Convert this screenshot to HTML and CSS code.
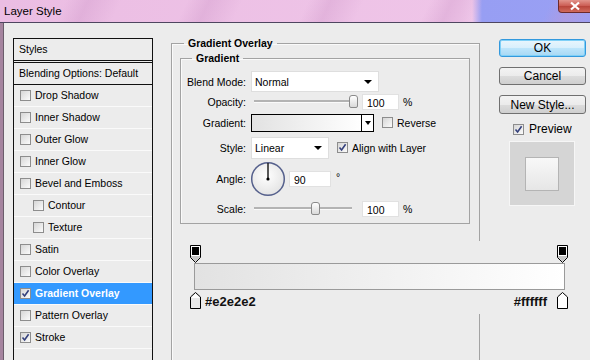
FILE: index.html
```html
<html>
<head>
	<meta http-equiv="Content-Type" content="text/html; charset=UTF-8">
	<title>Layer Style</title>
	<link rel="stylesheet" href="styles.css">
</head>
<body>
<div class="window">
	<div class="titlebar">
		<span class="title">Layer Style</span>
		<span class="close">
			<svg width="14" height="10" viewBox="0 0 14 10"><path d="M3 1.5 L11 8.5 M11 1.5 L3 8.5" stroke="#fff" stroke-width="2.2" fill="none"/></svg>
		</span>
	</div>
	<div class="dialog">
		<div class="styles">
			<div class="styles_head">Styles</div>
			<ul class="style_list">
				<li class="blend">Blending Options: Default</li>
				<li><span class="cb"></span>Drop Shadow</li>
				<li><span class="cb"></span>Inner Shadow</li>
				<li><span class="cb"></span>Outer Glow</li>
				<li><span class="cb"></span>Inner Glow</li>
				<li><span class="cb"></span>Bevel and Emboss</li>
				<li class="sub"><span class="cb"></span>Contour</li>
				<li class="sub"><span class="cb"></span>Texture</li>
				<li><span class="cb"></span>Satin</li>
				<li><span class="cb"></span>Color Overlay</li>
				<li class="sel"><span class="cb"><svg width="9" height="9" viewBox="0 0 9 9"><path d="M1.5 4.5 L3.6 7 L7.6 1.2" fill="none" stroke="#34407c" stroke-width="1.6"/></svg></span>Gradient Overlay</li>
				<li><span class="cb"></span>Pattern Overlay</li>
				<li><span class="cb"><svg width="9" height="9" viewBox="0 0 9 9"><path d="M1.5 4.5 L3.6 7 L7.6 1.2" fill="none" stroke="#34407c" stroke-width="1.6"/></svg></span>Stroke</li>
				<li></li>
			</ul>
		</div>

		<fieldset class="group">
			<legend>Gradient Overlay</legend>
			<fieldset class="group inner">
				<legend>Gradient</legend>
				<div class="row r_blend">
					<span class="lbl">Blend Mode:</span>
					<span class="select sel_blend">Normal<span class="arrow"></span></span>
				</div>
				<div class="row r_opacity">
					<span class="lbl">Opacity:</span>
					<span class="slider"><span class="track"></span><span class="thumb" style="left:95px"></span></span>
					<span class="num">100</span>
					<span class="unit">%</span>
				</div>
				<div class="row r_gradient">
					<span class="lbl">Gradient:</span>
					<span class="swatch"><span class="swatch_fill"></span><span class="swatch_btn"><span class="arrow"></span></span></span>
					<span class="cb"></span><span class="cb_text">Reverse</span>
				</div>
				<div class="row r_style">
					<span class="lbl">Style:</span>
					<span class="select sel_style">Linear<span class="arrow"></span></span>
					<span class="cb"><svg width="9" height="9" viewBox="0 0 9 9"><path d="M1.5 4.5 L3.6 7 L7.6 1.2" fill="none" stroke="#34407c" stroke-width="1.6"/></svg></span><span class="cb_text">Align with Layer</span>
				</div>
				<div class="row r_angle">
					<span class="lbl">Angle:</span>
					<svg class="dial" width="36" height="36" viewBox="0 0 36 36">
						<defs>
							<radialGradient id="dialfill" cx="0.45" cy="0.4" r="0.6">
								<stop offset="0" stop-color="#ffffff"/>
								<stop offset="1" stop-color="#e4e4e4"/>
							</radialGradient>
						</defs>
						<circle cx="18" cy="18" r="16.3" fill="url(#dialfill)" stroke="#55608c" stroke-width="1.5"/>
						<line x1="18" y1="18" x2="18" y2="2" stroke="#000" stroke-width="1.3"/>
						<circle cx="18" cy="18" r="1.6" fill="#000"/>
					</svg>
					<span class="num num_angle">90</span>
					<span class="deg">°</span>
				</div>
				<div class="row r_scale">
					<span class="lbl">Scale:</span>
					<span class="slider"><span class="track"></span><span class="thumb" style="left:57px"></span></span>
					<span class="num">100</span>
					<span class="unit">%</span>
				</div>
			</fieldset>
		</fieldset>

		<div class="actions">
			<button class="btn btn_default">OK</button>
			<button class="btn">Cancel</button>
			<button class="btn btn_new">New Style...</button>
			<div class="preview_check">
				<span class="cb"><svg width="9" height="9" viewBox="0 0 9 9"><path d="M1.5 4.5 L3.6 7 L7.6 1.2" fill="none" stroke="#34407c" stroke-width="1.6"/></svg></span>Preview
			</div>
			<div class="preview_box"><div class="preview_swatch"></div></div>
		</div>
	</div>

	<!-- gradient editor strip pasted over the dialog -->
	<div class="grad_editor">
		<div class="stops">
			<svg width="11" height="18" viewBox="0 0 11 18"><path d="M0.5 0.5 H10.5 V12.5 L5.5 17.5 L0.5 12.5 Z" fill="#fff" stroke="#000"/><rect x="2" y="2" width="7" height="8" fill="#000"/><path d="M1 11 H10 V12.3 L5.5 16.8 L1 12.3 Z" fill="#c4c4c4"/></svg>
			<svg width="11" height="18" viewBox="0 0 11 18"><path d="M0.5 0.5 H10.5 V12.5 L5.5 17.5 L0.5 12.5 Z" fill="#fff" stroke="#000"/><rect x="2" y="2" width="7" height="8" fill="#000"/><path d="M1 11 H10 V12.3 L5.5 16.8 L1 12.3 Z" fill="#c4c4c4"/></svg>
		</div>
		<div class="gbar"></div>
		<div class="stops stops_bottom">
			<span class="stop_group">
				<svg width="11" height="17" viewBox="0 0 11 17"><path d="M5.5 0.5 L10.5 5 V16.5 H0.5 V5 Z" fill="#e8e8e8" stroke="#000"/><path d="M5.5 1.8 L9.5 5.4 V6 H1.5 V5.4 Z" fill="#fff"/></svg>
				<span class="hex hex_left">#e2e2e2</span>
			</span>
			<span class="stop_group">
				<span class="hex hex_right">#ffffff</span>
				<svg width="11" height="17" viewBox="0 0 11 17"><path d="M5.5 0.5 L10.5 5 V16.5 H0.5 V5 Z" fill="#fff" stroke="#000"/></svg>
			</span>
		</div>
	</div>
</div>
</body>
</html>
```

FILE: styles.css
```css
body
{
	margin: 0;
	background-color: #ececec;
	font-family: "Liberation Sans", Arial, sans-serif;
	font-size: 10.5px;
	color: #000;
	overflow: hidden;
}
.window
{
	position: relative;
	width: 590px;
	height: 360px;
	overflow: hidden;
}

/* title bar */
.titlebar
{
	height: 22px;
	border-bottom: 1px solid #4e4660;
	background:
		repeating-linear-gradient(115deg, rgba(255,255,255,0) 0, rgba(255,255,255,0) 60px, rgba(205,150,200,0.35) 80px, rgba(255,255,255,0) 110px),
		linear-gradient(90deg, #ebbde3 0, #efc5e8 460px, #f0c8ea 472px, #979ef3 482px, #9aa0f4 100%);
	display: flex;
	align-items: flex-start;
	justify-content: space-between;
}
.title
{
	font-size: 11.5px;
	line-height: 22px;
	margin-left: 4px;
}
.close
{
	width: 33px;
	height: 13px;
	margin-right: -1px;
	box-sizing: border-box;
	border: 1px solid #6d2a2a;
	border-top: none;
	border-radius: 0 0 0 4px;
	background: linear-gradient(#e2948c 0, #cb5b52 50%, #b8443a 51%, #d06a5c 100%);
	display: flex;
	align-items: center;
	justify-content: center;
}

/* dialog */
.dialog
{
	display: flex;
	align-items: flex-start;
	height: 337px;
	padding-left: 10px;
	border-left: 3px solid #a5849f;
	box-shadow: inset 1px 0 0 #6b5d6b;
}

.styles
{
	width: 140px;
	margin-top: 15px;
	box-sizing: border-box;
	border: 1px solid #111;
	border-bottom: none;
	height: 330px;
}
.styles_head
{
	height: 21px;
	line-height: 20px;
	padding-left: 5px;
	border-bottom: 1px solid #111;
	margin-bottom: 1px;
}
.style_list
{
	list-style: none;
	margin: 0;
	padding: 0;
	border-top: 1px solid #111;
}
.style_list li
{
	height: 20px;
	padding-bottom: 1px;
	border-bottom: 1px solid #fafafa;
	display: flex;
	align-items: center;
	padding-left: 6px;
}
.style_list li.blend
{
	height: 20px;
	padding-left: 5px;
	border-bottom: 1px solid #111;
}
.style_list li.sub
{
	padding-left: 19px;
}
.style_list li.sel
{
	background-color: #3399ff;
	color: #fff;
	font-weight: bold;
}

/* checkbox */
.cb
{
	display: inline-flex;
	align-items: center;
	justify-content: center;
	width: 9px;
	height: 9px;
	border: 1px solid #8d8d8d;
	background: linear-gradient(135deg, #d6d6d6, #fbfbfb);
	margin-right: 4px;
	flex: none;
}
.cb svg
{
	display: block;
}

/* groups */
.group
{
	margin: 13px 0 0 18px;
	padding: 0 9px 0 8px;
	width: 309px;
	height: 400px;
	box-sizing: border-box;
	border: 1px solid #a3a3a3;
	box-shadow: inset 1px 1px 0 #fafafa;
}
.group legend
{
	font-weight: bold;
	line-height: 14px;
	padding: 0 4px;
	margin-left: 4px;
}
.group.inner
{
	margin: 1px 0 0 0;
	width: 290px;
	height: auto;
	padding: 6px 0 3px 0;
}
.group.inner legend
{
	margin-left: 11px;
}

.row
{
	display: flex;
	align-items: center;
}
.lbl
{
	width: 65px;
	text-align: right;
	margin-right: 5px;
	flex: none;
}
.r_blend { height: 21px; }
.r_opacity { height: 19px; }
.r_gradient { height: 23px; }
.r_style { height: 27px; }
.r_angle { height: 36px; }
.r_scale { height: 23px; }

.select
{
	position: relative;
	height: 21px;
	line-height: 21px;
	box-sizing: border-box;
	background-color: #fff;
	border: 1px solid #dedede;
	padding-left: 3px;
}
.sel_blend { width: 128px; }
.sel_style { width: 78px; height: 22px; margin-right: 8px; }
.arrow
{
	position: absolute;
	right: 6px;
	top: 50%;
	margin-top: -2px;
	width: 0;
	height: 0;
	border-left: 4px solid transparent;
	border-right: 4px solid transparent;
	border-top: 4px solid #000;
}

.slider
{
	position: relative;
	width: 98px;
	height: 13px;
	margin-left: 3px;
	margin-right: 10px;
}
.track
{
	position: absolute;
	left: 0;
	right: 0;
	top: 5px;
	height: 3px;
	box-sizing: border-box;
	border-top: 2px solid #b3b3b3;
	border-bottom: 1px solid #fafafa;
}
.thumb
{
	position: absolute;
	top: 0;
	width: 7px;
	height: 11px;
	border: 1px solid #8a8a8a;
	border-radius: 3px 3px 2px 2px;
	background: linear-gradient(#ffffff, #d9d9d9);
}

.num
{
	width: 37px;
	height: 16px;
	line-height: 16px;
	box-sizing: border-box;
	background-color: #fff;
	border: 1px solid #e1e1e1;
	padding-left: 4px;
	flex: none;
}
.unit
{
	margin-left: 4px;
}

.swatch
{
	display: flex;
	width: 123px;
	height: 18px;
	box-sizing: border-box;
	border: 1px solid #000;
	margin-right: 8px;
}
.swatch_fill
{
	flex: 1;
	background: linear-gradient(90deg, #e2e2e2, #ffffff);
}
.swatch_btn
{
	position: relative;
	width: 11px;
	border-left: 1px solid #000;
	background-color: #fff;
}
.swatch_btn .arrow
{
	right: 2px;
	border-left-width: 3px;
	border-right-width: 3px;
}

.dial
{
	margin-left: -1px;
	margin-right: 3px;
}
.num_angle
{
	width: 42px;
}
.deg
{
	margin-left: 5px;
	align-self: flex-start;
	margin-top: 10px;
}

/* buttons column */
.actions
{
	margin: 16px 0 0 19px;
	width: 87px;
	display: flex;
	flex-direction: column;
}
.btn
{
	width: 87px;
	height: 18px;
	padding: 0;
	box-sizing: border-box;
	border: 1px solid #707070;
	border-radius: 3px;
	background: linear-gradient(#f3f3f3 0, #ebebeb 50%, #dcdcdc 51%, #cfcfcf 100%);
	font-family: "Liberation Sans", Arial, sans-serif;
	font-size: 12px;
	line-height: 16px;
	color: #000;
	margin-bottom: 10px;
}
.btn_default
{
	border-color: #3399dd;
	background: linear-gradient(#e9f6fd 0, #d8effc 50%, #bde5fb 51%, #a7d8f4 100%);
	box-shadow: inset 0 0 0 1px #7fd0f7;
}
.btn_new
{
	height: 19px;
	margin-bottom: 8px;
}
.preview_check
{
	display: flex;
	align-items: center;
	height: 14px;
	font-size: 12px;
	margin-left: 14px;
}
.preview_check .cb
{
	margin-right: 5px;
}
.preview_box
{
	width: 66px;
	height: 65px;
	margin: 5px 0 0 10px;
	box-sizing: border-box;
	background-color: #d5d5d5;
	border: 1px solid #f6f6f6;
	display: flex;
	align-items: center;
	justify-content: center;
}
.preview_swatch
{
	width: 34px;
	height: 34px;
	box-sizing: border-box;
	border: 1px solid #b4b4b4;
	background: linear-gradient(#f8f8f8, #e6e6e6);
}

/* gradient editor overlay */
.grad_editor
{
	position: absolute;
	left: 185px;
	top: 241px;
	width: 390px;
	height: 73px;
	box-sizing: border-box;
	padding: 4px 0 0 5px;
	background-color: #ececec;
}
.stops
{
	display: flex;
	justify-content: space-between;
	width: 378px;
	height: 18px;
}
.stops svg
{
	display: block;
}
.gbar
{
	margin-left: 4px;
	width: 371px;
	height: 27px;
	box-sizing: border-box;
	border: 1px solid #9a9a9a;
	background: linear-gradient(90deg, #e2e2e2, #ffffff);
}
.stops_bottom
{
	margin-top: 2px;
	height: 17px;
	align-items: flex-end;
}
.stop_group
{
	display: flex;
	align-items: center;
}
.hex
{
	font-weight: bold;
	font-size: 13px;
	color: #111;
	margin-top: 3px;
}
.hex_left
{
	margin-left: 4px;
}
.hex_right
{
	margin-right: 10px;
}
```
